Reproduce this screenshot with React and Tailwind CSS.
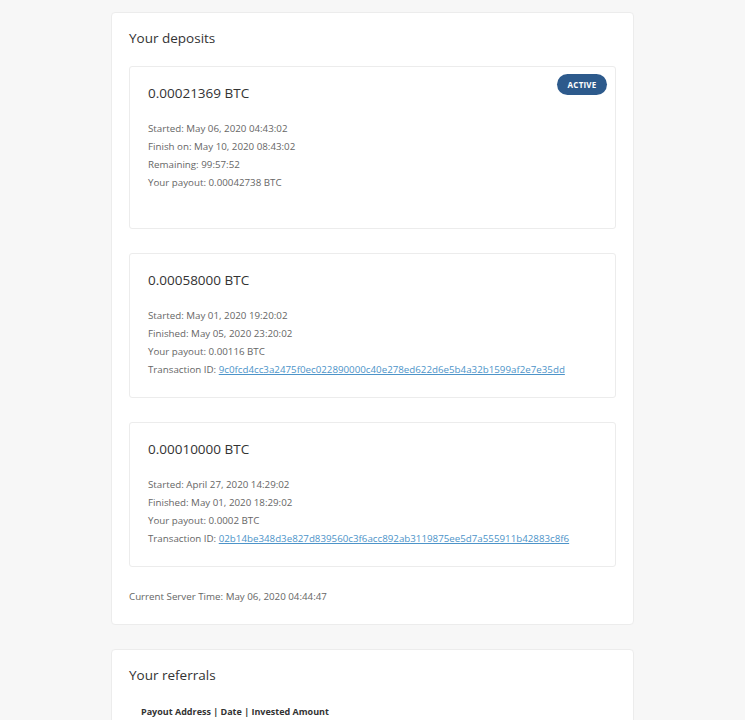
import React from "react";

const deposits = [
  {
    amount: "0.00021369 BTC",
    active: true,
    lines: [
      ["Started:", "May 06, 2020 04:43:02"],
      ["Finish on:", "May 10, 2020 08:43:02"],
      ["Remaining:", "99:57:52"],
      ["Your payout:", "0.00042738 BTC"],
    ],
  },
  {
    amount: "0.00058000 BTC",
    lines: [
      ["Started:", "May 01, 2020 19:20:02"],
      ["Finished:", "May 05, 2020 23:20:02"],
      ["Your payout:", "0.00116 BTC"],
    ],
    tx: "9c0fcd4cc3a2475f0ec022890000c40e278ed622d6e5b4a32b1599af2e7e35dd",
  },
  {
    amount: "0.00010000 BTC",
    lines: [
      ["Started:", "April 27, 2020 14:29:02"],
      ["Finished:", "May 01, 2020 18:29:02"],
      ["Your payout:", "0.0002 BTC"],
    ],
    tx: "02b14be348d3e827d839560c3f6acc892ab3119875ee5d7a555911b42883c8f6",
  },
];

const DepositCard = ({ d }) => (
  <div
    className={`relative border border-[#ececec] rounded-[3px] bg-white px-[18px] pt-[16px] ${
      d.active ? "pb-[36px]" : "pb-[18px]"
    }`}
  >
    {d.active && (
      <span className="absolute top-[7px] right-[8px] w-[50px] h-[21px] rounded-full bg-[#2d5a8c] text-white text-[8px] font-bold flex items-center justify-center tracking-[0.2px]">
        ACTIVE
      </span>
    )}
    <div className="text-[13.5px] leading-[20px] text-[#333]">{d.amount}</div>
    <div className="mt-[17px] text-[9.75px] leading-[18px] text-[#666]">
      {d.lines.map(([k, v]) => (
        <div key={k}>
          {k} {v}
        </div>
      ))}
      {d.tx && (
        <div>
          Transaction ID:{" "}
          <a href="#" className="text-[#4d94c9] underline">
            {d.tx}
          </a>
        </div>
      )}
    </div>
  </div>
);

export default function App() {
  return (
    <div
      className="min-h-screen bg-[#f7f7f7] pt-[12px] pb-8"
      style={{ fontFamily: '"Open Sans", "Liberation Sans", sans-serif' }}
    >
      <div className="ml-[111px] w-[523px] space-y-6">
        <div className="bg-white border border-[#ececec] rounded-[4px] px-[17px] pt-[15px] pb-[18px]">
          <h2 className="text-[13.5px] leading-[20px] text-[#333]">Your deposits</h2>
          <div className="mt-[18px] space-y-6">
            {deposits.map((d) => (
              <DepositCard key={d.amount} d={d} />
            ))}
          </div>
          <div className="mt-[21px] text-[9.75px] leading-[18px] text-[#666]">
            Current Server Time: May 06, 2020 04:44:47
          </div>
        </div>

        <div className="bg-white border border-[#ececec] rounded-[4px] px-[17px] pt-[15px] pb-[18px]">
          <h2 className="text-[13.5px] leading-[20px] text-[#333]">Your referrals</h2>
          <table className="mt-[16px]">
            <thead>
              <tr>
                <th className="px-[12px] py-[4px] text-[9px] font-bold text-[#333] text-left">
                  Payout Address | Date | Invested Amount
                </th>
              </tr>
            </thead>
          </table>
        </div>
      </div>
    </div>
  );
}
